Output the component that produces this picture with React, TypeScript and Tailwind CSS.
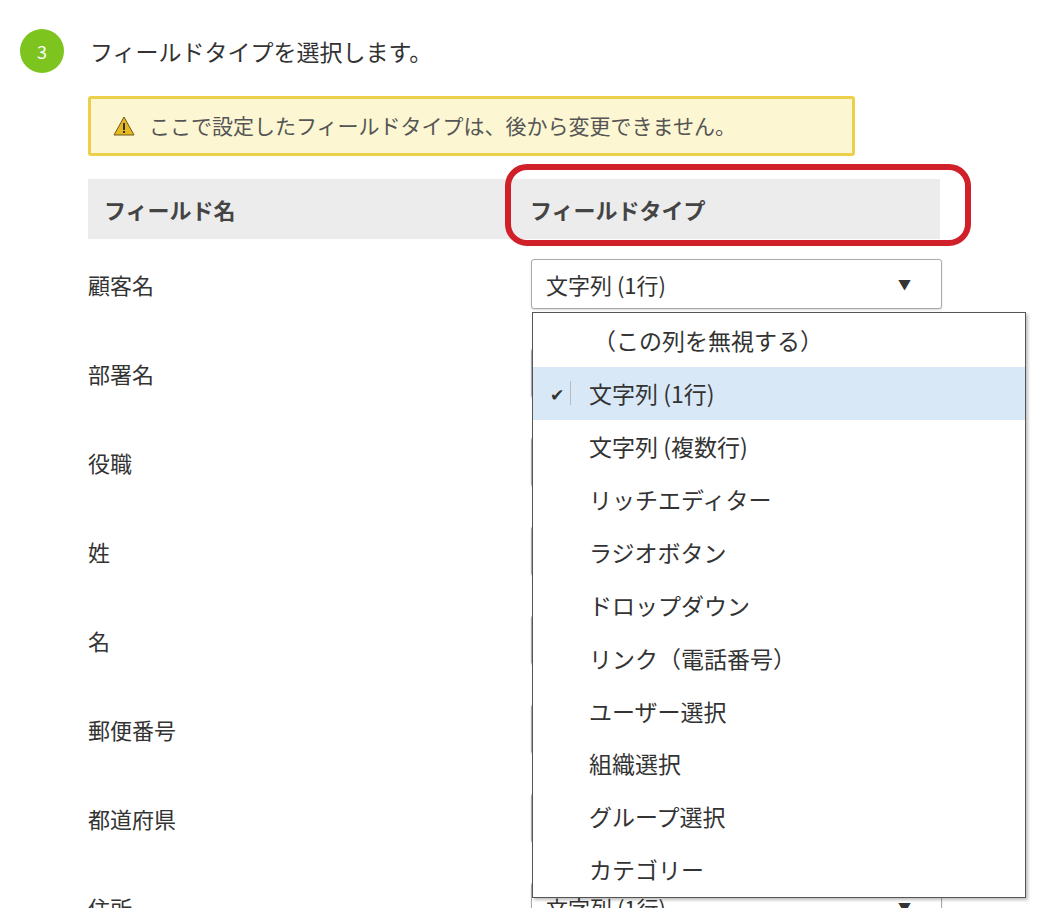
const rows = ["顧客名", "部署名", "役職", "姓", "名", "郵便番号", "都道府県", "住所"];
const options = [
  "（この列を無視する）",
  "文字列 (1行)",
  "文字列 (複数行)",
  "リッチエディター",
  "ラジオボタン",
  "ドロップダウン",
  "リンク（電話番号）",
  "ユーザー選択",
  "組織選択",
  "グループ選択",
  "カテゴリー",
];

const Select = () => (
  <div className="w-[411px] h-[50px] border border-[#a9a9a9] rounded-[3px] bg-white flex items-center justify-between px-[14px] shadow-[0_1px_2px_rgba(0,0,0,0.15)]">
    <span className="text-[22px] text-[#333]">文字列 (1行)</span>
    <span className="text-[13px] text-[#333] mr-[16px]">▼</span>
  </div>
);

export default function App() {
  return (
    <div
      className="w-[1038px] h-[908px] bg-white overflow-hidden relative text-[#333]"
      style={{ fontFamily: '"Noto Sans CJK JP", "Noto Sans", sans-serif' }}
    >
      <div className="flex items-center pl-[20px] pt-[29px]">
        <div className="w-[44px] h-[44px] rounded-full bg-[#7dc41f] text-white text-[18px] flex items-center justify-center">3</div>
        <span className="ml-[26px] text-[23px]">フィールドタイプを選択します。</span>
      </div>

      <div className="ml-[88px] mt-[23px] w-[767px] h-[60px] bg-[#fcf7d2] border-[3px] border-[#ecd04c] rounded-[3px] flex items-center pl-[22px]">
        <svg width="22" height="20" viewBox="0 0 22 20">
          <path d="M11 1 L21 19 L1 19 Z" fill="#e8b820" stroke="#6b5a1a" strokeWidth="1" />
          <rect x="10" y="7" width="2" height="7" fill="#333" />
          <rect x="10" y="15" width="2" height="2" fill="#333" />
        </svg>
        <span className="ml-[14px] text-[21px] text-[#555]">ここで設定したフィールドタイプは、後から変更できません。</span>
      </div>

      <div className="relative ml-[88px] mt-[23px] w-[852px] h-[60px] bg-[#ececec] flex items-center">
        <span className="w-[442px] pl-[16px] text-[22px] font-bold text-[#444]">フィールド名</span>
        <span className="text-[22px] font-bold text-[#444]">フィールドタイプ</span>
        <div className="absolute left-[417px] top-[-15px] w-[466px] h-[82px] border-[6px] border-[#d0202a] rounded-[22px]" />
      </div>

      <div className="ml-[88px] mt-[20px] flex flex-col gap-[39px]">
        {rows.map((r) => (
          <div key={r} className="flex items-center h-[50px]">
            <span className="w-[443px] text-[22px]">{r}</span>
            <Select />
          </div>
        ))}
      </div>

      <div className="absolute left-[532px] top-[312px] w-[494px] h-[586px] bg-white border border-[#555] shadow-[2px_2px_3px_rgba(0,0,0,0.25)] flex flex-col py-[1px]">
        {options.map((o, i) => (
          <div
            key={o}
            className={`h-[53.3px] flex items-center text-[23px] ${i === 1 ? "bg-[#d9e8f7]" : ""} ${i === 0 ? "pl-[60px]" : "pl-[56px]"}`}
          >
            {i === 1 && (
              <span className="absolute left-[17px] flex items-center">
                <span className="text-[17px]">✔</span>
                <span className="ml-[6px] w-px h-[24px] bg-[#bbb]" />
              </span>
            )}
            {o}
          </div>
        ))}
      </div>
    </div>
  );
}
